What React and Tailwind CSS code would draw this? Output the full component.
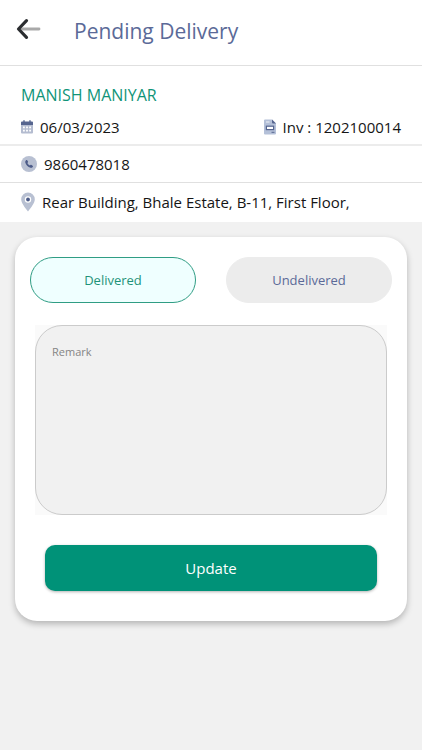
import { useState } from 'react'

const STATUSES = ['Delivered', 'Undelivered']

const DELIVERY = {
  customer: 'MANISH MANIYAR',
  date:     '06/03/2023',
  invoice:  '1202100014',
  phone:    '9860478018',
  address:  'Rear Building, Bhale Estate, B-11, First Floor,',
}

function BackIcon() {
  return (
    <svg width="26" height="22" viewBox="0 0 26 22" fill="none" strokeLinecap="round" strokeLinejoin="round" aria-hidden="true">
      <path d="M5 11h18" stroke="#a9a9a9" strokeWidth="2.800" />
      <path d="M10.500 2.700L2.500 11l8 8.300" stroke="#2b2d30" strokeWidth="3.200" />
    </svg>
  )
}

function CalendarIcon() {
  return (
    <svg width="12" height="14" viewBox="0 0 12 14" className="shrink-0" aria-hidden="true">
      <path d="M0 4.500h12v8a1 1 0 0 1-1 1H1a1 1 0 0 1-1-1z" fill="#b4bcd0" />
      <path d="M1 1.500h10a1 1 0 0 1 1 1v2.500H0V2.500a1 1 0 0 1 1-1z" fill="#56658f" />
      <path d="M3 0.700v2M9 0.700v2" stroke="#56658f" strokeWidth="1.400" strokeLinecap="round" />
      <g fill="#fff">
        <rect x="2" y="6.500" width="1.800" height="1.800" />
        <rect x="5.100" y="6.500" width="1.800" height="1.800" />
        <rect x="8.200" y="6.500" width="1.800" height="1.800" />
        <rect x="2" y="9.700" width="1.800" height="1.800" />
        <rect x="5.100" y="9.700" width="1.800" height="1.800" />
        <rect x="8.200" y="9.700" width="1.800" height="1.800" />
      </g>
    </svg>
  )
}

function InvoiceIcon() {
  return (
    <svg width="12" height="16" viewBox="0 0 12 16" className="shrink-0" aria-hidden="true">
      <path d="M1 0.500h7L12 4.500v10a1 1 0 0 1-1 1H1a1 1 0 0 1-1-1v-13a1 1 0 0 1 1-1z" fill="#b4c0d8" />
      <path d="M8 0.500l4 4H9a1 1 0 0 1-1-1z" fill="#56658f" />
      <path d="M2 3h3.500" stroke="#e6eaf2" strokeWidth="1.200" />
      <rect x="2.400" y="7.200" width="7.200" height="3.400" fill="#fff" stroke="#56658f" strokeWidth="1.200" />
      <path d="M7.500 13.300h3" stroke="#56658f" strokeWidth="1" />
    </svg>
  )
}

function PhoneIcon() {
  return (
    <svg width="16" height="16" viewBox="0 0 16 16" className="shrink-0" aria-hidden="true">
      <circle cx="8" cy="8" r="8" fill="#b8c0d2" />
      <path
        d="M5 4.200c.4-.4.9-.3 1.200.1l.8 1.200c.2.400.1.800-.2 1.100l-.4.400c.4 1 1.400 2 2.500 2.500l.5-.5c.3-.3.700-.3 1.100-.1l1.100.8c.4.300.5.800.1 1.200-.6.700-1.300 1-2.200.8C6.900 11.100 4.700 8.700 4.200 6.200 4.100 5.400 4.400 4.700 5 4.200z"
        fill="#4c5b88"
      />
    </svg>
  )
}

function PinIcon() {
  return (
    <svg width="14" height="20" viewBox="0 0 14 20" className="shrink-0" aria-hidden="true">
      <path d="M7 0.500a6.800 6.800 0 0 1 6.800 6.800c0 4-3.800 8.200-6.800 12.200C4 15.500.2 11.300.2 7.300A6.800 6.800 0 0 1 7 .500z" fill="#b8c0d2" />
      <circle cx="7" cy="7.500" r="3.200" fill="#fff" />
      <circle cx="7" cy="7.500" r="1.900" fill="#4c5b88" />
    </svg>
  )
}

function App() {
  const [status, setStatus] = useState('Delivered')
  const [remark, setRemark] = useState('')

  const handleSubmit = (e) => {
    e.preventDefault()
  }

  return (
    <div className="min-h-screen bg-[#f1f1f1] font-['Open_Sans','Noto_Sans',sans-serif] text-[15px] leading-6 text-[#151515]">
      {/* Header */}
      <header className="flex h-[66px] items-center gap-8 border-b border-[#e0e0e0] bg-white px-4 pb-1">
        <button type="button" aria-label="Back" className="-mt-1">
          <BackIcon />
        </button>
        <h1 className="text-[21px] leading-8 text-[#5b6a98]">Pending Delivery</h1>
      </header>

      {/* Delivery details */}
      <section className="bg-white">
        <div className="border-b-2 border-[#ececec] px-[21px] pt-[17px] pb-[5px]">
          <h2 className="text-base text-[#0f9478]">{DELIVERY.customer}</h2>
          <div className="mt-2 flex items-center justify-between">
            <p className="flex items-center gap-[7px]"><CalendarIcon />{DELIVERY.date}</p>
            <p className="flex items-center gap-[7px]"><InvoiceIcon />Inv : {DELIVERY.invoice}</p>
          </div>
        </div>
        <p className="flex items-center gap-[7px] border-b border-[#e0e0e0] px-[21px] py-1.5">
          <PhoneIcon />{DELIVERY.phone}
        </p>
        <p className="flex items-center gap-[7px] px-[21px] pt-[7px] pb-2"><PinIcon />{DELIVERY.address}</p>
      </section>

      {/* Update form */}
      <form
        onSubmit={handleSubmit}
        className="m-[15px] rounded-[22px] bg-white px-[15px] pt-5 pb-[30px] shadow-[0_3px_6px_rgba(0,0,0,0.25)]"
      >
        <div className="grid grid-cols-2 gap-[30px] text-[13px]">
          {STATUSES.map((s) => (
            <button
              key={s}
              type="button"
              aria-pressed={status === s}
              onClick={() => setStatus(s)}
              className={`h-[46px] rounded-full border ${
                status === s
                  ? 'border-[#2f9d84] bg-[#efffff] text-[#1f9379]'
                  : 'border-[#ececec] bg-[#ececec] text-[#5b6a98]'
              }`}
            >
              {s}
            </button>
          ))}
        </div>

        <div className="mx-[5px] mt-[22px] bg-[#fafafa]">
          <textarea
            aria-label="Remark"
            value={remark}
            onChange={(e) => setRemark(e.target.value)}
            placeholder="Remark"
            className="block h-[190px] w-full resize-none rounded-[27px] border border-[#cbcbcb] bg-[#f1f1f1] px-4 py-[18px] text-[11px] leading-4 outline-none placeholder:text-[#858585]"
          />
        </div>

        <div className="mt-[30px] px-[15px]">
          <button
            type="submit"
            className="h-[46px] w-full rounded-[10px] bg-[#009278] text-[15px] text-white shadow-[0_1px_3px_rgba(0,0,0,0.3)]"
          >
            Update
          </button>
        </div>
      </form>
    </div>
  )
}

export default App
